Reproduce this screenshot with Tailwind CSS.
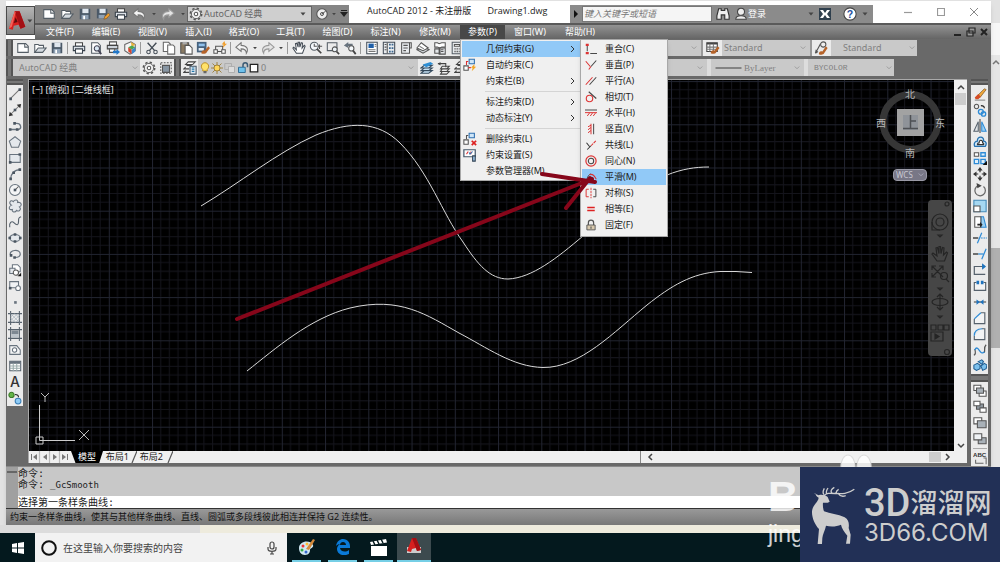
<!DOCTYPE html>
<html lang="zh-CN">
<head>
  <meta charset="UTF-8">
  <meta name="viewport" content="width=device-width, initial-scale=1">
  <title>AutoCAD 2012 - Drawing1.dwg</title>
  <script src="https://cdn.jsdelivr.net/npm/@tailwindcss/browser@4"></script>
</head>
<body class="relative flex h-screen flex-col overflow-hidden bg-[#e2e2e2] fill-none stroke-[1.2] font-['Noto_Sans','Noto_Sans_CJK_SC',sans-serif] text-[9px] leading-4 text-[#222]">

  <!-- Icon set -->
  <svg class="hidden">
    <symbol id="new" viewBox="0 0 16 16"><path d="M2 3h9l3 3v7H2z" fill="#fff" stroke="#555e66"/><path d="M10 3v4h4" stroke="#555e66"/></symbol>
    <symbol id="open" viewBox="0 0 16 16"><path d="M2 13V4h4l1 1h5v3" fill="#fff" stroke="#555e66"/><path d="M2 13l4-5h9l-4 5z" fill="#d5dbe0" stroke="#555e66"/></symbol>
    <symbol id="save" viewBox="0 0 16 16"><path d="M2 2h12v12H2z" fill="#4b5968"/><path d="M5 2h7v5H5z" fill="#dfe6ee"/><path d="M4 9h8v5H4z" fill="#8fa1b5"/><path d="M6 10h2v4H6z" fill="#fff"/></symbol>
    <symbol id="saveas" viewBox="0 0 16 16"><path d="M1 2h12v11H1z" fill="#4b5968"/><path d="M4 2h7v5H4z" fill="#dfe6ee"/><path d="M3 9h7v4H3z" fill="#8fa1b5"/><path d="M9 14l1-3 4-4 2 2-4 4z" fill="#f0a030" stroke="#7a4a12" stroke-width=".6"/></symbol>
    <symbol id="print" viewBox="0 0 16 16"><path d="M4 2h8v4H4z" fill="#fff" stroke="#444"/><path d="M1.500 6h13v5h-13z" fill="#dde2e8" stroke="#39424c"/><path d="M4 9h8v5H4z" fill="#fff" stroke="#39424c"/></symbol>
    <symbol id="preview" viewBox="0 0 16 16"><path d="M3 2h7l3 3v9H3z" fill="#fff" stroke="#555e66"/><circle cx="9" cy="8.500" r="3" fill="#dbe9f5" stroke="#445"/><path d="M11 11l3 4" stroke="#445" stroke-width="2"/></symbol>
    <symbol id="publish" viewBox="0 0 16 16"><path d="M4 1h8v4H4z" fill="#fff" stroke="#555"/><path d="M1.500 5h12v4h-12z" fill="#cdd3da" stroke="#444"/><path d="M4 9h6v4H4z" fill="#fff" stroke="#555"/><path d="M8 11h4V9l4 3.500-4 3.500v-2H8z" fill="#2277c8"/></symbol>
    <symbol id="cube" viewBox="0 0 16 16"><path d="M2 4l7-3 5 3v7l-6 4-6-4z" fill="#f4f4f4" stroke="#666"/><path d="M9 1l5 3-4 3z" fill="#e8b23c"/><path d="M6 7l4-2 4 2-4 3z" fill="#4da64d"/><path d="M6 7l4 3v5l-4-3z" fill="#d8462c"/><path d="M10 10l4-3v5l-4 3z" fill="#3a86cf"/></symbol>
    <symbol id="cut" viewBox="0 0 16 16"><path d="M3 2l8 9M13 2L5 11" stroke="#444c55" stroke-width="1.600"/><circle cx="4" cy="12.500" r="2" stroke="#444c55"/><circle cx="12" cy="12.500" r="2" stroke="#444c55"/></symbol>
    <symbol id="copy" viewBox="0 0 16 16"><path d="M1.500 1.500h6l2 2V12h-8z" fill="#fff" stroke="#666"/><path d="M6.500 4.500h6l2 2V15h-8z" fill="#fff" stroke="#666"/></symbol>
    <symbol id="paste" viewBox="0 0 16 16"><path d="M2 2h9v12H2z" fill="#8a7a62" stroke="#555"/><path d="M4 1h5v3H4z" fill="#aaa"/><path d="M7 5h5l3 3v7H7z" fill="#fff" stroke="#555"/></symbol>
    <symbol id="match" viewBox="0 0 16 16"><path d="M1 1h11v12H1z" fill="#47627e"/><path d="M3 3h7v3H3z" fill="#8fc0ec"/><path d="M3 8h6v3H3z" fill="#e6edf4"/><path d="M6 14c0-3 3-4 4-3l4-5 2 2-4 5c-1 2-4 2-6 1z" fill="#b5632a"/></symbol>
    <symbol id="block" viewBox="0 0 16 16"><path d="M3 6h8v6H3z" stroke="#555"/><path d="M1 10h4v4H1zM10 10h4v4h-4z" fill="#fff" stroke="#555"/><path d="M13 0l-3 4h2l-1 4 5-5h-2z" fill="#f0a030"/></symbol>
    <symbol id="undo" viewBox="0 0 16 16"><path d="M7 2L1 7l6 5V9c4 0 6 1 6 5 3-5 0-9-6-9z" fill="#f4f4f4" stroke="#777"/></symbol>
    <symbol id="redo" viewBox="0 0 16 16"><path d="M9 2l6 5-6 5V9c-4 0-6 1-6 5-3-5 0-9 6-9z" fill="#e4e4e4" stroke="#999"/></symbol>
    <symbol id="down" viewBox="0 0 16 16"><path d="M3 5h10l-5 6z" fill="#444"/></symbol>
    <symbol id="pan" viewBox="0 0 16 16"><path d="M5 14L1 8l1-1 3 3-1-7 1.500-.5L7 7V1.500h1.500L9 7l1.500-5 1.500.5L11.500 8 14 5l1 1-3 8z" fill="#fff" stroke="#444c55"/></symbol>
    <symbol id="zoom" viewBox="0 0 16 16"><circle cx="6" cy="6" r="4.500" fill="#f4f8fb" stroke="#555e66"/><path d="M9 9l5 5" stroke="#444" stroke-width="2"/><path d="M6 3v3h3M12 4v5M10 6h5" stroke="#555"/></symbol>
    <symbol id="zoomwin" viewBox="0 0 16 16"><path d="M1.500 2h11v9h-11z" stroke="#555e66"/><circle cx="10" cy="9.500" r="2.800" fill="#eef5fa" stroke="#555"/><path d="M12 12l3 3" stroke="#444" stroke-width="2"/></symbol>
    <symbol id="zoomprev" viewBox="0 0 16 16"><path d="M6 1L1 5l5 3V6h5V3H6z" fill="#68737e"/><circle cx="9.500" cy="8.500" r="3" fill="#f4f8fb" stroke="#555"/><path d="M11.500 11l3 4" stroke="#444" stroke-width="2"/></symbol>
    <symbol id="props" viewBox="0 0 16 16"><path d="M2 1.500h12v13H2z" fill="#fff" stroke="#434d58"/><path d="M4 3h6v5H4z" fill="#1f5fa8"/><path d="M11 4h2M11 6h2M4 10h8M4 12h8" stroke="#777"/></symbol>
    <symbol id="dcenter" viewBox="0 0 16 16"><path d="M1.500 1.500h13v13h-13z" fill="#e8ebee" stroke="#434d58"/><path d="M6 2v12M3 4h2M3 7h2M3 10h2" stroke="#555"/><path d="M8 3h2v2H8zM11 3h2v2h-2zM8 7h2v2H8zM11 7h2v2h-2zM8 11h2v2H8zM11 11h2v2h-2z" fill="#3c6890"/></symbol>
    <symbol id="palette" viewBox="0 0 16 16"><path d="M3 2h9v12H3z" fill="#e8ebee" stroke="#555"/><path d="M12 2h2v6h-2M5 5h5M5 8h5M5 11h3" stroke="#555"/></symbol>
    <symbol id="sheet" viewBox="0 0 16 16"><path d="M1 10l7-3 7 3-7 4z" fill="#d5dade" stroke="#555"/><path d="M1 8l5-6 8 6-6 3z" fill="#fff" stroke="#555"/><path d="M4 6l5 3" stroke="#777"/></symbol>
    <symbol id="markup" viewBox="0 0 16 16"><path d="M2 2h3l2 1 3-1h4v5h-4l-2 1-3-1H2z" fill="#fff" stroke="#555"/><path d="M2 9h6v5H2zM7 8h7v7H7z" fill="#e4e7ea" stroke="#555"/><path d="M9 10h3M9 12h3" stroke="#555"/></symbol>
    <symbol id="calc" viewBox="0 0 16 16"><path d="M2.500 1.500h11v13h-11z" fill="#e8ebee" stroke="#555e66"/><path d="M5 4h6v2H5z" fill="#fff" stroke="#555"/><path d="M5 9h6M5 12h6" stroke="#555" stroke-width="1.500" stroke-dasharray="1.500 1"/></symbol>
    <symbol id="gear" viewBox="0 0 16 16"><circle cx="8" cy="8" r="6.500" stroke="#555" stroke-width="1.800" stroke-dasharray="2.600 2.500"/><circle cx="8" cy="8" r="5.300" fill="#f0f0f0" stroke="#555" stroke-width="1"/><circle cx="8" cy="8" r="2" fill="#fff" stroke="#555"/></symbol>
    <symbol id="frame" viewBox="0 0 16 16"><path d="M2 2h12v12H2z" stroke="#555" stroke-dasharray="2 1.500"/><path d="M4 5h8v8H4z" fill="#8795a2" stroke="#555"/></symbol>
    <symbol id="layers" viewBox="0 0 16 16"><path d="M6 1h8l-3 3H3zM4 5h6M3 7l-2 2h6M3 11l-2 2h6" fill="#fff" stroke="#444"/><path d="M8 6h7v9H8z" fill="#dfe8f0" stroke="#456"/><path d="M10 8h3M10 10h3M10 12h3" stroke="#27a"/></symbol>
    <symbol id="bulb" viewBox="0 0 16 16"><path d="M5 10C1 6 4 1 8 1s7 5 3 9v2H5z" fill="#ffe26a" stroke="#b98a1d"/><path d="M6 12h4v3H6z" fill="#666"/></symbol>
    <symbol id="sun" viewBox="0 0 16 16"><path d="M8 0v16M0 8h16M2 2l12 12M14 2L2 14" stroke="#9a7c35"/><circle cx="8" cy="8" r="4" fill="#ffd75a" stroke="#9a7c35"/></symbol>
    <symbol id="vp" viewBox="0 0 16 16"><path d="M1 2h9v8H1z" stroke="#aaa"/><path d="M6 6h8v8H6z" fill="#ddd" stroke="#aaa"/></symbol>
    <symbol id="unlock" viewBox="0 0 16 16"><path d="M8 7V4a3 3 0 016 0v3" stroke="#3a5a74" stroke-width="2"/><path d="M2 7h9v7H2z" fill="#6ec1ec" stroke="#2a6690"/></symbol>
    <symbol id="white" viewBox="0 0 16 16"><path d="M2 2h12v12H2z" fill="#fff" stroke="#222" stroke-width="2"/></symbol>
    <symbol id="stack" viewBox="0 0 16 16"><path d="M5 5h9l-4 3H1zM5 8h9l-4 3H1zM5 11h9l-4 3H1z" fill="#c9e4f7" stroke="#34495c"/><path d="M3 4l9-3 3 2-8 4z" fill="#2f8fd4"/></symbol>
    <symbol id="layprev" viewBox="0 0 16 16"><path d="M6 6h8l-3 3H4zM6 9h8l-3 3H4zM6 12h8l-3 3H4z" fill="#eee" stroke="#444"/><path d="M1 3h9v4" stroke="#444"/><path d="M1 3l3-2v4z" fill="#444"/></symbol>
    <symbol id="tblstyle" viewBox="0 0 16 16"><path d="M1.500 2h12v10h-12z" fill="#fff" stroke="#444"/><path d="M1.500 3h12" stroke="#444" stroke-width="2"/><path d="M1 7h13M1 9.500h13M5 3v9M9 3v9" stroke="#777"/><path d="M6 14c0-3 2-4 4-3l4-5 2 2-4 5c-1 2-4 2-6 1z" fill="#b5632a"/></symbol>
    <symbol id="mlstyle" viewBox="0 0 16 16"><path d="M1 14L7 3M1 14l1-4M1 14l3-2" stroke="#555"/><circle cx="10" cy="4" r="3" fill="#eee" stroke="#555"/><path d="M5 15c0-3 2-4 4-3l4-6 2 2-4 6c-1 2-4 2-6 1z" fill="#b5632a"/></symbol>

    <symbol id="line" viewBox="0 0 16 16"><path d="M3 13L13 3" stroke="#777"/><path d="M1.500 12h3v3h-3zM12 1.500h3v3h-3z" fill="#4a5560"/></symbol>
    <symbol id="xline" viewBox="0 0 16 16"><path d="M2 14L14 2" stroke="#777"/><path d="M1 15l1-5 4 4zM15 1l-1 5-4-4z" fill="#333"/><path d="M6.500 6.500h3v3h-3z" fill="#4a5560"/></symbol>
    <symbol id="pline" viewBox="0 0 16 16"><path d="M2 12h10c4-1 3-7-2-7H8" stroke="#68737e" stroke-width="1.500"/><path d="M1 10.500h3v3H1zM9 10.500h3v3H9zM6 3.500h3v3H6z" fill="#4a5560"/></symbol>
    <symbol id="polygon" viewBox="0 0 16 16"><path d="M8 2l6.500 5-2.500 7H4L1.500 7z" fill="#e4e8ec" stroke="#68737e"/></symbol>
    <symbol id="rect" viewBox="0 0 16 16"><path d="M2 4h12v9H2z" fill="#e4e8ec" stroke="#68737e"/><path d="M1 11.500h3v3H1zM12 2.500h3v3h-3z" fill="#4a5560"/></symbol>
    <symbol id="arc" viewBox="0 0 16 16"><path d="M3 14C3 8 7 3 14 3" stroke="#68737e" stroke-width="1.500"/><path d="M1.500 12h3v3h-3zM12 1.500h3v3h-3zM5 5h3v3H5z" fill="#4a5560"/></symbol>
    <symbol id="circle" viewBox="0 0 16 16"><circle cx="8" cy="8" r="6.300" fill="#f4f5f6" stroke="#68737e"/><path d="M8 8l4-4" stroke="#555"/><path d="M6.500 6.500h3v3h-3z" fill="#4a5560"/></symbol>
    <symbol id="cloud" viewBox="0 0 16 16"><path d="M4 7C0 5 3 0 6 3c2-3 6-2 5 1 5-1 5 4 2 5 3 3-1 6-3 4-2 3-6 2-5-1-4 1-5-3-1-5z" fill="#e4e8ec" stroke="#68737e"/></symbol>
    <symbol id="spline" viewBox="0 0 16 16"><path d="M2 14c-1-5 2-8 5-5s5 3 5-1 0-5 3-6" stroke="#56616c" stroke-width="1.300"/></symbol>
    <symbol id="ellipse" viewBox="0 0 16 16"><ellipse cx="8" cy="8" rx="6" ry="4" fill="#e4e8ec" stroke="#68737e"/><path d="M0.500 6.500h3v3h-3zM12.500 6.500h3v3h-3zM6.500 2.500h3v3h-3zM6.500 10.500h3v3h-3z" fill="#4a5560"/></symbol>
    <symbol id="earc" viewBox="0 0 16 16"><path d="M3 9c-3-5 11-8 11-1 0 3-3 4-6 4" stroke="#68737e" stroke-width="1.400"/><path d="M2 8h3v3H2zM6 10.500h3v3H6z" fill="#4a5560"/></symbol>
    <symbol id="insert" viewBox="0 0 16 16"><path d="M5 2h6l3 3v5H5z" fill="#fff" stroke="#68737e"/><path d="M2 6h6v6H2z" fill="#e4e8ec" stroke="#68737e"/><circle cx="9" cy="11" r="3" fill="#fff" stroke="#555"/><path d="M15 11v4h-4z" fill="#111"/></symbol>
    <symbol id="mkblock" viewBox="0 0 16 16"><path d="M2 3h10v7H2z" fill="#f0f2f4" stroke="#68737e"/><path d="M1 9h3v3H1z" fill="#4a5560"/><circle cx="11.500" cy="10.500" r="2.700" fill="#fff" stroke="#68737e"/></symbol>
    <symbol id="point" viewBox="0 0 16 16"><path d="M7 7h3v3H7z" fill="#68737e"/></symbol>
    <symbol id="hatch" viewBox="0 0 16 16"><path d="M3 0v16M13 0v16M0 3h16M0 13h16" stroke="#56616c"/><path d="M3 7l4-4M3 11l8-8M5 13l8-8M9 13l4-4M3 3l10 10M3 8l5 5M8 3l5 5" stroke="#a8b4be" stroke-width=".8"/></symbol>
    <symbol id="gradient" viewBox="0 0 16 16"><path d="M4 4h8v4H4z" fill="#7d8892"/><path d="M4 8h8v4H4z" fill="#bcc4cb"/><path d="M3 0v16M13 0v16M0 3h16M0 13h16" stroke="#56616c"/></symbol>
    <symbol id="region" viewBox="0 0 16 16"><path d="M2 3h8l4 5v5H2z" fill="#f3f4f5" stroke="#68737e"/><circle cx="7.500" cy="8" r="2.500" fill="#fff" stroke="#68737e"/></symbol>
    <symbol id="table" viewBox="0 0 16 16"><path d="M2 2.500h12.500v11H2z" fill="#fff" stroke="#56616c"/><path d="M2 4h12" stroke="#68737e" stroke-width="3"/><path d="M2 8h12M2 10.500h12M6 5v9M10 5v9" stroke="#9aa"/></symbol>
    <symbol id="mtext" viewBox="0 0 16 16"><text x="8" y="14" font-size="16" font-weight="500" text-anchor="middle" fill="#333" font-family="Inter, sans-serif">A</text></symbol>
    <symbol id="addsel" viewBox="0 0 16 16"><circle cx="4" cy="4.500" r="3" fill="#64b548" stroke="#3c7a2a"/><circle cx="11.500" cy="11.500" r="3.300" fill="#8ecbf5" stroke="#3c80b8"/><path d="M8 4c3 0 4 1 4 3" stroke="#222"/></symbol>

    <symbol id="erase" viewBox="0 0 16 16"><path d="M5 10l8-8 2 1-7 9z" fill="#f0a83c" stroke="#7a5322" stroke-width=".8"/><path d="M2 12l4-4 3 3-3 3H3z" fill="#d44c25"/><path d="M2 15h12" stroke="#888"/></symbol>
    <symbol id="mcopy" viewBox="0 0 16 16"><circle cx="4" cy="4" r="2.500" stroke="#555"/><path d="M9 3c3 0 4 1 4 3" stroke="#222"/><circle cx="9" cy="10" r="2.800" stroke="#2e8bd6" stroke-width="1.500"/><circle cx="12" cy="12.500" r="2.500" stroke="#2e8bd6" stroke-width="1.500"/></symbol>
    <symbol id="mirror" viewBox="0 0 16 16"><path d="M6 3v11H1z" fill="#e3e6e8" stroke="#56616c"/><path d="M10 3v11h5z" fill="#9cd0f2" stroke="#2e8bd6"/><path d="M8 0v16" stroke="#444"/></symbol>
    <symbol id="offset" viewBox="0 0 16 16"><path d="M2 13c-2-5 2-6 3-6 0-6 8-6 7 0 3 0 4 3 2 6z" fill="#cde6f8" stroke="#2471b0" stroke-width="1.500"/><path d="M5 11c0-2 1-2 2-2 0-4 4-4 4 0 1 0 2 1 1 2z" fill="#fff" stroke="#333"/></symbol>
    <symbol id="array" viewBox="0 0 16 16"><path d="M1.500 2h5v4h-5z" fill="#fff" stroke="#555"/><path d="M9 2h5v4H9zM1.500 9.500h5v5h-5zM9 9.500h5v5H9z" fill="#e0f0fb" stroke="#2e8bd6" stroke-width="1.500"/><path d="M16 11v5h-5z" fill="#111"/></symbol>
    <symbol id="move" viewBox="0 0 16 16"><path d="M8 2v4M8 10v4M2 8h4M10 8h4" stroke="#333" stroke-width="1.400"/><path d="M8 0l3 4H5zM8 16l3-4H5zM0 8l4-3v6zM16 8l-4-3v6z" fill="#333"/></symbol>
    <symbol id="rotate" viewBox="0 0 16 16"><path d="M6 3a6 6 0 106 1" stroke="#666" stroke-width="1.400"/><path d="M4 0l6 3-5 3z" fill="#444"/></symbol>
    <symbol id="scale" viewBox="0 0 16 16"><path d="M1 1.500h14v13H1z" fill="#a5d8f2" stroke="#4189b8"/><path d="M1 8h7v6.500H1z" fill="#fff" stroke="#555"/></symbol>
    <symbol id="stretch" viewBox="0 0 16 16"><path d="M9 2h3l3 12H9z" fill="#9cd0f2" stroke="#2e8bd6"/><path d="M2 2h7v12H2z" fill="#fff" stroke="#555"/><path d="M5 10h3V8l3 3-3 3v-2H5z" fill="#222"/></symbol>
    <symbol id="trim" viewBox="0 0 16 16"><path d="M5 14l5-12" stroke="#2e8bd6" stroke-width="1.400"/><path d="M0 8h6" stroke="#222" stroke-width="1.400"/><path d="M9 8h7" stroke="#2e8bd6" stroke-dasharray="2 1"/></symbol>
    <symbol id="extend" viewBox="0 0 16 16"><path d="M10 14l5-12" stroke="#2e8bd6" stroke-width="1.400"/><path d="M0 8h6" stroke="#222" stroke-width="1.400"/><path d="M6 8h6" stroke="#2e8bd6" stroke-width="1.400"/></symbol>
    <symbol id="breakpt" viewBox="0 0 16 16"><path d="M13 4H1.500v9H14" stroke="#56616c" stroke-width="1.400"/><path d="M11 1.500l3 2.500-3 2.500z" fill="#1e73be" stroke="#1e73be"/></symbol>
    <symbol id="break" viewBox="0 0 16 16"><path d="M4 4H1.500v9h13V4H12" fill="#f2f3f4" stroke="#56616c" stroke-width="1.300"/><path d="M4 2h3v4H4zM9 2h3v4H9z" fill="#1e73be"/></symbol>
    <symbol id="join" viewBox="0 0 16 16"><path d="M1 8h14" stroke="#444"/><path d="M4 5l4 3-4 3zM12 5L8 8l4 3z" fill="#1e73be"/></symbol>
    <symbol id="chamfer" viewBox="0 0 16 16"><path d="M1.500 9v5.500h12V2H9" fill="#f2f3f4" stroke="#56616c" stroke-width="1.300"/><path d="M1.500 9L9 2" stroke="#2e8bd6" stroke-width="1.400"/></symbol>
    <symbol id="fillet" viewBox="0 0 16 16"><path d="M1.500 10v4.500h12V2H10" fill="#f2f3f4" stroke="#56616c" stroke-width="1.300"/><path d="M1.500 10c0-5 3-8 9-8" stroke="#2e8bd6" stroke-width="1.400"/></symbol>
    <symbol id="blend" viewBox="0 0 16 16"><path d="M1 14c2-1 2-4 1-7M13 11c1-3-1-6 2-9" stroke="#555" stroke-width="1.400"/><path d="M2 8c4-8 6 8 11 2" stroke="#2e8bd6" stroke-width="1.500"/></symbol>
    <symbol id="explode" viewBox="0 0 16 16"><path d="M1 7l4-2 3 2v4l-4 2-3-2zM6 3l4-2 2 2-2 3zM9 8l4-3 3 2-1 4-4 2z" fill="#7cc0ec" stroke="#215f93"/></symbol>
    <symbol id="front" viewBox="0 0 16 16"><path d="M1 1.500h8v6H1zM7 8h8v6H7z" fill="#fff" stroke="#555"/><path d="M4 4.500h8v6H4z" fill="#a9b1b8" stroke="#555"/></symbol>
    <symbol id="back" viewBox="0 0 16 16"><path d="M4 4.500h8v6H4z" fill="#8d969e" stroke="#555"/><path d="M1 1.500h7v5H1zM8 9h7v5H8z" fill="#fff" stroke="#555"/></symbol>
    <symbol id="above" viewBox="0 0 16 16"><path d="M1 2h9v7H1z" fill="#fff" stroke="#555"/><path d="M5 5.500h10v8H5z" fill="#a9b1b8" stroke="#555"/></symbol>
    <symbol id="under" viewBox="0 0 16 16"><path d="M6 6.500h9v7H6z" fill="#a9b1b8" stroke="#555"/><path d="M1 2h9v7H1z" fill="#eef1f4" stroke="#555"/></symbol>
    <symbol id="abc" viewBox="0 0 16 16"><text x="0" y="7" font-size="7" font-weight="700" fill="#333" font-family="Liberation Sans, sans-serif">ABC</text><path d="M3 10v4h9M12 8h3v7" stroke="#666"/></symbol>

    <symbol id="g-coincident" viewBox="0 0 16 16"><path d="M3 4v7M7 14h9" stroke="#444" stroke-width="1.300"/><path d="M1 1h4v3H1zM1 12h4v3H1z" fill="#d33"/></symbol>
    <symbol id="g-perp" viewBox="0 0 16 16"><path d="M1 3l6 7M5 14l3-4" stroke="#d33" stroke-width="1.400"/><path d="M8 10l7-8" stroke="#444" stroke-width="1.400"/></symbol>
    <symbol id="g-parallel" viewBox="0 0 16 16"><path d="M1 13L10 3" stroke="#d33" stroke-width="1.400"/><path d="M6 13l9-10" stroke="#444" stroke-width="1.400"/></symbol>
    <symbol id="g-tangent" viewBox="0 0 16 16"><circle cx="6" cy="10" r="4.300" stroke="#d33" stroke-width="1.500"/><path d="M5 1l10 9" stroke="#444" stroke-width="1.400"/></symbol>
    <symbol id="g-horizontal" viewBox="0 0 16 16"><path d="M0 4h16" stroke="#444" stroke-width="1.300"/><path d="M0 7.500h16M3 12l3-4M7 12l3-4M11 12l3-4" stroke="#d33" stroke-width="1.300"/></symbol>
    <symbol id="g-vertical" viewBox="0 0 16 16"><path d="M11.500 1v14" stroke="#444" stroke-width="1.300"/><path d="M8 1v14M4 5l4-2M4 9l4-3M4 13l4-3" stroke="#d33" stroke-width="1.300"/></symbol>
    <symbol id="g-collinear" viewBox="0 0 16 16"><path d="M2 5l4 5M3 14l4-4 1-1" stroke="#333" stroke-width="1.400"/><path d="M8 9l7-7" stroke="#d33" stroke-width="1.400" stroke-dasharray="4 1"/></symbol>
    <symbol id="g-concentric" viewBox="0 0 16 16"><circle cx="8" cy="8" r="6.800" stroke="#d33" stroke-width="1.600"/><circle cx="8" cy="8" r="3.600" stroke="#444" stroke-width="1.400"/></symbol>
    <symbol id="g-smooth" viewBox="0 0 16 16"><path d="M2 12c2-6 4-8 6-8" stroke="#444" stroke-width="1.300"/><path d="M6 5c4-2 7 2 9 6" stroke="#d33" stroke-width="1.500"/></symbol>
    <symbol id="g-symmetric" viewBox="0 0 16 16"><path d="M5 3H1.500v10H5" stroke="#d33" stroke-width="1.300"/><path d="M8 1v14" stroke="#d33" stroke-dasharray="3 1"/><path d="M11 3h3.500v10H11" stroke="#444" stroke-width="1.300"/></symbol>
    <symbol id="g-equal" viewBox="0 0 16 16"><path d="M3 6h10M3 10h10" stroke="#d22" stroke-width="2"/></symbol>
    <symbol id="g-fix" viewBox="0 0 16 16"><path d="M4.500 8V5a3.500 3.500 0 017 0v3" stroke="#555" stroke-width="1.600"/><path d="M2.500 8h11v6.500h-11z" fill="#d8c9ae" stroke="#555"/><path d="M8 10v3" stroke="#555" stroke-width="1.500"/></symbol>
    <symbol id="autoc" viewBox="0 0 16 16"><path d="M7 1.500h6v5H7z" fill="#cfe6f8" stroke="#2e6fb0"/><path d="M1 9h5v5H1z" fill="#fff" stroke="#555"/><path d="M4 8V4h2M6 11h3" stroke="#d33"/><path d="M13 7l-4 4h2l-1 4 5-5h-2z" fill="#f5a623"/></symbol>
    <symbol id="delc" viewBox="0 0 16 16"><path d="M7 1.500h6v5H7z" fill="#cfe6f8" stroke="#2e6fb0"/><path d="M1 9h5v5H1z" fill="#fff" stroke="#555"/><path d="M4 8V4h2" stroke="#555"/><path d="M10 10l5 5M15 10l-5 5" stroke="#d22" stroke-width="2"/></symbol>
    <symbol id="setc" viewBox="0 0 16 16"><path d="M1 2h13v8H1z" fill="#fff" stroke="#46586a" stroke-width="1.400"/><path d="M4 7l2-3M9 4v3" stroke="#d33"/><path d="M7 5l1 2 3-3" stroke="#2e6fb0"/><path d="M11 9h3v6h-3z" fill="#9cc3e6" stroke="#345"/></symbol>
    <symbol id="sub" viewBox="0 0 6 8"><path d="M1 1l3 3-3 3" stroke="#333" stroke-width="1"/></symbol>
    <symbol id="chev" viewBox="0 0 8 6"><path d="M1 1l3 3 3-3" stroke="#999"/></symbol>
  </svg>

  <!-- Application window -->
  <div class="mt-px mr-[9px] ml-1.5 flex min-h-0 flex-1 flex-col bg-[#696969] shadow-md">

    <header class="relative z-20 flex bg-white">
      <button aria-label="应用程序菜单" class="mt-[5px] flex h-[29px] w-[29px] items-center border border-[#4a4a4a] bg-linear-to-b from-[#b5b5b5] to-[#7e7e7e]">
        <svg class="h-6 w-5" viewBox="0 0 20 24"><path d="M2 20L8 2h5l6 16-5 2-2-4-5 1-1 4z" fill="#d6201f"/><path d="M8 2h5l6 16-5 2z" fill="#a30f14"/><path d="M9 8l2 5-4 1z" fill="#5d0b0e"/><path d="M2 20L8 2l1 1-4 15z" fill="#f4625a"/></svg>
        <svg class="size-2" viewBox="0 0 16 16"><use href="#down"/></svg>
      </button>
      <div class="flex min-w-0 flex-1 flex-col">
        <div class="flex h-[22px] items-end">
          <div class="flex h-[18px] w-[314px] items-center bg-[#858585]">
            <div class="flex items-center gap-0.5 pl-1.5" data-icons="new:新建 open:打开 save:保存 saveas:另存为 print:打印 undo:放弃 down:更多放弃 redo:重做 down:更多重做" data-size="sm"></div>
            <label class="ml-auto flex h-4 w-[126px] items-center border border-[#666] bg-[#cfcfcf] pr-1 pl-px text-[#666]">
              <svg class="size-3.5 shrink-0" aria-hidden="true"><use href="#gear"/></svg>
              <select aria-label="工作空间" class="min-w-0 flex-1 appearance-none pl-px"><option>AutoCAD 经典</option></select>
              <svg class="size-2" aria-hidden="true"><use href="#down"/></svg>
            </label>
            <button aria-label="导航" class="flex h-full w-[37px] items-center justify-around bg-[#858585] pl-0.5">
              <svg class="size-3" viewBox="0 0 16 16"><circle cx="8" cy="8" r="7" fill="#eee" stroke="#555" stroke-width="1.500"/><circle cx="8" cy="8" r="2" stroke="#444"/><path d="M8 8l5-4" stroke="#444"/></svg>
              <svg class="size-1.5"><use href="#down"/></svg>
              <svg class="size-2" viewBox="0 0 8 8"><path d="M1 0h6v1H1zM0 2h8L4 7z" fill="#222"/></svg>
            </button>
          </div>
          <h1 class="ml-[18px] pb-1 font-['Open_Sans','Noto_Sans_CJK_SC',sans-serif] text-[9px] leading-4 whitespace-pre text-[#222]">AutoCAD 2012 - 未注册版       Drawing1.dwg</h1>
          <div class="mr-[31px] ml-auto flex h-[18px] w-[303px] items-center bg-[#8b8b8b]">
            <button aria-label="展开搜索" class="flex w-3 justify-center"><svg class="h-2 w-1.5" viewBox="0 0 6 8"><path d="M1 0l4 4-4 4z" fill="#111"/></svg></button>
            <input aria-label="搜索" placeholder="键入关键字或短语" class="h-4 w-[130px] border border-[#777] bg-[#f5f5f5] px-px text-[9px] italic placeholder:text-[#777]">
            <button aria-label="查找" class="ml-1"><svg class="size-3.5" viewBox="0 0 16 16"><path d="M3 2h3v2h4V2h3l2 8v4h-5V9H6v5H1v-4z" fill="#eee" stroke="#333" stroke-width="1.300"/></svg></button>
            <button class="ml-1 flex items-center text-white"><svg class="size-3.5" viewBox="0 0 16 16"><circle cx="8" cy="5.500" r="4" fill="#eee" stroke="#444"/><path d="M2 14c0-3 3-4 6-4s6 1 6 4z" fill="#eee" stroke="#444"/></svg>登录</button>
            <svg class="ml-auto size-2"><use href="#down"/></svg>
            <button aria-label="Exchange" class="ml-1"><svg class="size-3" viewBox="0 0 12 12"><path d="M0 0h12v12H0z" fill="#2f3f4d"/><path d="M1 2h3l2 3 2-3h3L8 6l3 4H8L6 7l-2 3H1l3-4z" fill="#fff"/></svg></button>
            <button aria-label="帮助" class="ml-3 flex items-center gap-1"><svg class="size-3.5" viewBox="0 0 16 16"><circle cx="8" cy="8" r="7" fill="#fff" stroke="#444"/><text x="8" y="12.500" text-anchor="middle" font-size="12" font-weight="700" fill="#1c4fa0" font-family="Liberation Sans, sans-serif">?</text></svg><svg class="mr-1 size-2"><use href="#down"/></svg></button>
          </div>
          <div class="mr-[13px] flex h-full items-center gap-[25px]">
            <button aria-label="最小化"><svg class="size-2" viewBox="0 0 8 8"><path d="M0 4.500h8" stroke="#999"/></svg></button>
            <button aria-label="最大化"><svg class="size-2" viewBox="0 0 8 8"><path d="M.5.5h7v7h-7z" stroke="#999"/></svg></button>
            <button aria-label="关闭"><svg class="size-2" viewBox="0 0 8 8"><path d="M0 0l8 8M8 0L0 8" stroke="#888" stroke-width="1"/></svg></button>
          </div>
        </div>

        <nav class="flex h-4 items-stretch border-t-2 border-[#5a5a5a] bg-linear-to-b from-[#939393] to-[#656565] pl-0.5 leading-[14px] text-white">
          <button class="w-[46px]">文件(F)</button>
          <button class="w-[46px]">编辑(E)</button>
          <button class="w-[47px]">视图(V)</button>
          <button class="w-[45px]">插入(I)</button>
          <button class="w-[46px]">格式(O)</button>
          <button class="w-[47px]">工具(T)</button>
          <button class="w-[47px]">绘图(D)</button>
          <button class="w-[49px]">标注(N)</button>
          <button class="w-[50px]">修改(M)</button>
          <div class="relative w-[45px]">
            <button class="h-full w-full bg-[#484848]">参数(P)</button>
            <!-- Parametric menu -->
            <ul class="absolute top-full left-0 w-[121px] border border-[#a8a8a8] bg-[#f0f0f0] py-px text-[#222] shadow-md" role="menu">
              <li class="relative ml-px"><button class="flex h-4 w-full items-center bg-[#91c9f7] pr-1"><span class="w-6"></span>几何约束(G)<svg class="ml-auto h-2 w-1.5"><use href="#sub"/></svg></button>
                <ul id="geo" class="absolute -top-0.5 left-full h-[198px] w-[88px] border border-[#a8a8a8] bg-[#f0f0f0] pt-px shadow-md" role="menu"></ul>
              </li>
              <li><button class="flex h-4 w-full items-center pr-1"><span class="flex w-[25px] pl-0.5"><svg class="size-3.5"><use href="#autoc"/></svg></span>自动约束(C)</button></li>
              <li><button class="flex h-4 w-full items-center pr-1"><span class="w-[25px]"></span>约束栏(B)<svg class="ml-auto h-2 w-1.5"><use href="#sub"/></svg></button></li>
              <li class="my-0.5 ml-6 border-t border-[#d4d4d4]"></li>
              <li><button class="flex h-4 w-full items-center pr-1"><span class="w-[25px]"></span>标注约束(D)<svg class="ml-auto h-2 w-1.5"><use href="#sub"/></svg></button></li>
              <li><button class="flex h-4 w-full items-center pr-1"><span class="w-[25px]"></span>动态标注(Y)<svg class="ml-auto h-2 w-1.5"><use href="#sub"/></svg></button></li>
              <li class="my-0.5 ml-6 border-t border-[#d4d4d4]"></li>
              <li><button class="flex h-4 w-full items-center pr-1"><span class="flex w-[25px] pl-0.5"><svg class="size-3.5"><use href="#delc"/></svg></span>删除约束(L)</button></li>
              <li><button class="flex h-4 w-full items-center pr-1"><span class="flex w-[25px] pl-0.5"><svg class="size-3.5"><use href="#setc"/></svg></span>约束设置(S)</button></li>
              <li><button class="flex h-4 w-full items-center pr-1"><span class="w-[25px]"></span>参数管理器(M)</button></li>
            </ul>
          </div>
          <button class="w-[50px]">窗口(W)</button>
          <button class="w-[50px]">帮助(H)</button>
          <div class="mr-[3px] ml-auto flex items-center gap-1">
            <button aria-label="最小化图形"><svg class="size-2" viewBox="0 0 8 8"><path d="M0 6h7v2H0z" fill="#222"/></svg></button>
            <button aria-label="还原图形"><svg class="size-2.5" viewBox="0 0 10 10"><path d="M3 1h6v5H3zM1 4h6v5H1z" fill="#999" stroke="#222"/></svg></button>
            <button aria-label="关闭图形"><svg class="size-2" viewBox="0 0 8 8"><path d="M1 1l6 6M7 1L1 7" stroke="#222" stroke-width="2"/></svg></button>
          </div>
        </nav>
      </div>
    </header>

    <!-- Toolbars -->
    <div class="flex flex-col gap-[3px] pt-px pb-[3px] text-[#808080]">
      <div class="mr-[74px] flex h-4 bg-[#ebebeb]">
        <div class="w-[7px] border-x-2 border-[#555] bg-[#777]"></div>
        <div class="flex items-center pl-px" data-icons="new:新建 open:打开 save:保存 | print:打印 preview:预览 publish:发布 cube:三维打印 | cut:剪切 copy:复制 paste:粘贴 match:特性匹配 block:块编辑器 | undo:放弃 down:更多放弃 redo:重做 down:更多重做 | pan:平移 zoom:缩放 zoomwin:窗口缩放 zoomprev:上一个 | props:特性 dcenter:设计中心 palette:工具选项板 sheet:图纸集 markup:标记集 calc:计算器"></div>
        <label class="ml-2 flex flex-1 items-center bg-[#c9c9c9] pr-1"><select aria-label="文字样式" class="h-full flex-1 appearance-none pl-2"><option>Standard</option></select><svg class="size-1.5"><use href="#chev"/></svg></label>
        <label class="flex w-[109px] items-center border-l-2 border-[#999] bg-[#c9c9c9] pr-1"><svg class="h-4 w-[19px] bg-[#ebebeb] p-px"><use href="#tblstyle"/></svg><select aria-label="表格样式" class="h-full min-w-0 flex-1 appearance-none pl-0.5"><option>Standard</option></select><svg class="size-1.5"><use href="#chev"/></svg></label>
        <label class="flex w-[107px] items-center border-l-2 border-[#999] bg-[#c9c9c9] pr-0.5"><svg class="h-4 w-[19px] bg-[#ebebeb] p-px"><use href="#mlstyle"/></svg><select aria-label="多重引线样式" class="h-full min-w-0 flex-1 appearance-none pl-3"><option>Standard</option></select><svg class="size-1.5"><use href="#chev"/></svg></label>
      </div>
      <div class="mr-[97px] flex h-[17px] bg-[#ebebeb]">
        <div class="w-[7px] border-x-2 border-[#555] bg-[#777]"></div>
        <label class="flex w-[127px] items-center bg-[#c9c9c9] pr-0.5"><select aria-label="当前工作空间" class="h-full min-w-0 flex-1 appearance-none pl-1.5"><option>AutoCAD 经典</option></select><svg class="size-1.5"><use href="#chev"/></svg></label>
        <div class="flex w-[34px] items-center" data-icons="gear:工作空间设置 frame:我的工作空间"></div>
        <div class="w-[7px] border-x-2 border-[#555] bg-[#777]"></div>
        <div class="flex w-[17px] items-center" data-icons="layers:图层特性"></div>
        <label class="flex w-[220px] items-center bg-[#c9c9c9] pr-1 pl-px">
          <svg class="size-3"><use href="#bulb"/></svg><svg class="size-3"><use href="#sun"/></svg><svg class="mx-px size-3"><use href="#vp"/></svg><svg class="size-3"><use href="#unlock"/></svg><svg class="size-2.5"><use href="#white"/></svg>
          <select aria-label="图层" class="h-full min-w-0 flex-1 appearance-none pl-0.5"><option>0</option></select><svg class="size-1.5"><use href="#chev"/></svg></label>
        <div class="flex items-center" data-icons="stack:将对象的图层置为当前 layprev:上一个图层 layers:图层状态管理器"></div>
        <label class="ml-2 flex flex-1 items-center bg-[#c9c9c9] pr-1"><select aria-label="颜色" class="h-full flex-1 appearance-none pl-2"><option>ByLayer</option></select><svg class="size-1.5"><use href="#chev"/></svg></label>
        <label class="flex w-[97px] items-center border-l-4 border-[#ddd] bg-[#c9c9c9] pr-1"><svg class="h-1 w-[31px] shrink-0 pl-1" viewBox="0 0 26 4"><path d="M0 2h26" stroke="#555"/></svg><select aria-label="线宽" class="h-full min-w-0 flex-1 appearance-none pl-0.5 font-['Liberation_Serif',serif]"><option>ByLayer</option></select><svg class="size-1.5"><use href="#chev"/></svg></label>
        <label class="flex w-[90px] items-center border-l-4 border-[#ddd] bg-[#c9c9c9] pr-0.5"><select aria-label="打印样式" class="h-full min-w-0 flex-1 appearance-none pl-1.5 font-['Liberation_Mono',monospace] text-[8px]"><option>BYCOLOR</option></select><svg class="size-1.5"><use href="#chev"/></svg></label>
      </div>
    </div>

    <!-- Workspace -->
    <main class="flex min-h-0 flex-1">
      <aside class="ml-px w-4 self-start bg-[#ebebeb]">
        <div class="mb-px h-[6px] border-y-2 border-[#555] bg-[#777]"></div>
        <div class="flex flex-col" data-icons="line:直线 xline:构造线 pline:多段线 polygon:多边形 rect:矩形 arc:圆弧 circle:圆 cloud:修订云线 spline:样条曲线 ellipse:椭圆 earc:椭圆弧 insert:插入块 mkblock:创建块 point:点 hatch:图案填充 gradient:渐变色 region:面域 table:表格 mtext:多行文字 addsel:添加选定对象" data-size="md"></div>
      </aside>

      <section class="mr-1 mb-[3px] ml-[5px] flex min-w-0 flex-1 flex-col border-t border-l border-[#aaa]">
        <div class="flex min-h-0 flex-1">
          <div class="relative min-w-0 flex-1 overflow-hidden bg-black">
            <svg class="absolute inset-0 h-full w-full" stroke-width="1">
              <defs>
                <pattern id="grid" width="43.250" height="43.200" patternUnits="userSpaceOnUse" x="22.300" y="124.300">
                  <path d="M8.650 0v43M17.300 0v43M25.950 0v43M34.600 0v43M0 8.650h43M0 17.300h43M0 25.950h43M0 34.600h43" stroke="#14141b"/>
                  <path d="M.5 0v44M0 .5h44" stroke="#222531"/>
                </pattern>
              </defs>
              <g transform="translate(-29 -80)" stroke-width="1">
                <path d="M29 80h2000v2000H29z" fill="url(#grid)"/>
                <path d="M201 206C238 184 278 152 316 135C350 121 378 121 400 143C429 172 442 213 463 242C478 265 490 279 508 279C532 278 557 258 583 236C612 210 636 188 667 175C682 169 695 167 709 167" stroke="#d8d8d8"/>
                <path d="M247 371C275 349 310 318 350 308C400 296 427 315 459 333C486 347 513 367 543 367.500C580 368 614 332 647 305C671 286 692 273 720 271.500Q736 271 752 272.500" stroke="#d8d8d8"/>
                <path d="M39.500 405v35.500H75M36 437h7v7h-7z" stroke="#ccc"/>
                <path d="M41 393l4 4 4-4M45 397v5M79 430l10 10M89 430l-10 10" stroke="#bbb"/>
              </g>
            </svg>
            <p class="absolute top-0.5 left-[3px] text-[#e8e8e8]">[−] [俯视] [二维线框]</p>

            <!-- View cube -->
            <svg class="absolute top-1 right-1 h-20 w-[76px]" viewBox="0 0 76 80" font-size="10" text-anchor="middle">
              <circle cx="36.500" cy="38" r="27.500" stroke="#363636" stroke-width="7"/>
              <path d="M23 25h27v27H23z" fill="#a2a2a2"/>
              <path d="M29 31h15v15H29z" fill="#8f9399"/>
              <path d="M36.500 31v13M37 37h5M29 44.500h15" stroke="#4e5054" stroke-width="1.500"/>
              <g fill="#b8b8b8" stroke="none"><text x="36" y="14">北</text><text x="36" y="73">南</text><text x="7" y="43">西</text><text x="66" y="43">东</text></g>
            </svg>
            <button class="absolute top-[89px] right-[27px] flex h-3 w-[34px] items-center justify-between rounded-sm border border-[#9a9aa6] bg-[#787786] px-0.5 text-[8px] leading-3 text-[#c8c8d2]">WCS<svg class="size-1.5" viewBox="0 0 8 6"><path d="M1 1l3 3 3-3" stroke="#aab"/></svg></button>
            <div class="absolute top-[120px] right-0.5 h-[156px] w-6 rounded-sm bg-[#464646]">
              <svg class="h-[156px] w-6" viewBox="0 0 24 156" stroke="#252525" stroke-width="1.200">
                <circle cx="19" cy="4" r="2"/><circle cx="12" cy="22" r="8"/><circle cx="12" cy="22" r="4"/><path d="M4 22v8h8M10 35h4l-2 2z"/>
                <path d="M9 61l-5-7 1-1 4 3-1-8 1.500-.5 1.500 6v-7h1.500l.5 7 1.500-6 1.500.5-.5 7 3-3 1 1-3 8z"/>
                <path d="M4 66l11 11M15 66L4 77M4 70v-4h4M11 66h4v4M4 73v4h4"/><circle cx="16" cy="76" r="3.500"/><path d="M18 79l3 3M10 88h4l-2 2z"/>
                <path d="M12 94v16M9 97l3-3 3 3M9 107l3 3 3-3"/><ellipse cx="12" cy="102" rx="8" ry="3.500"/><path d="M10 116h4l-2 2z"/>
                <path d="M3 125h5v5H3zM10 125h5v5h-5zM16 125h5v5h-5zM3 132h12v9H3z"/><path d="M7 134l4 2.500-4 2.500z" fill="#252525"/><circle cx="19" cy="152" r="2.500"/>
              </svg>
            </div>
          </div>
          <div class="flex w-[13px] flex-col items-center bg-[#f0f0f0] pt-1">
            <svg class="h-1.5 w-2" viewBox="0 0 8 6"><path d="M1 5l3-3 3 3" stroke="#444" stroke-width="1.500"/></svg>
            <div class="mt-[3px] h-3 w-[11px] bg-[#cdcdcd]"></div>
            <svg class="mt-auto mb-0.5 h-1.5 w-2" viewBox="0 0 8 6"><path d="M1 1l3 3 3-3" stroke="#444" stroke-width="1.500"/></svg>
          </div>
        </div>
        <div class="flex h-3 items-center bg-[#f0f0f0] text-[9px] leading-3">
          <svg class="h-3 w-[42px]" viewBox="0 0 42 12"><path d="M10.500 0v12M20.500 0v12M30.500 0v12" stroke="#bbb"/><path d="M2 3h1v6H2zM8 3v6L4 6zM18 3v6l-4-3zM24 3v6l4-3zM33 3v6l4-3zM38 3h1v6h-1z" fill="#777"/></svg>
          <button class="h-3 w-8 bg-black text-white [clip-path:polygon(0_0,100%_0,88%_100%,14%_100%)]">模型</button>
          <button class="w-[26px] text-right">布局1</button>
          <svg class="ml-0.5 h-3 w-1.5" viewBox="0 0 6 12"><path d="M6 0L1 12" stroke="#555"/></svg>
          <button class="w-[26px] text-right">布局2</button>
          <svg class="ml-1 h-3 w-1.5" viewBox="0 0 6 12"><path d="M6 0L1 12" stroke="#555"/></svg>
          <div class="ml-auto flex h-full w-[327px] items-center border-l border-[#888] pr-4 pl-1.5">
            <svg class="h-2 w-1.5" viewBox="0 0 6 8"><path d="M5 1L2 4l3 3" stroke="#444" stroke-width="1.500"/></svg>
            <div class="ml-auto h-2.5 w-3 bg-[#cdcdcd]"></div>
            <svg class="ml-1 h-2 w-1.5" viewBox="0 0 6 8"><path d="M1 1l3 3-3 3" stroke="#444" stroke-width="1.500"/></svg>
          </div>
        </div>
      </section>

      <aside class="mr-[3px] flex w-[17px] flex-col items-center overflow-hidden bg-[#ebebeb]">
        <div class="mb-px h-[6px] w-full shrink-0 border-y-2 border-[#555] bg-[#777]"></div>
        <div class="flex flex-col" data-icons="erase:删除 mcopy:复制 mirror:镜像 offset:偏移 array:阵列 move:移动 rotate:旋转 scale:缩放 stretch:拉伸 trim:修剪 extend:延伸 breakpt:打断于点 break:打断 join:合并 chamfer:倒角 fillet:圆角 blend:光顺曲线 explode:分解" data-size="md"></div>
        <div class="h-[8px] w-full shrink-0 border-y-2 border-[#555] bg-[#777]"></div>
        <div class="flex flex-col pt-px" data-icons="front:前置 back:后置 above:置于对象之上 under:置于对象之下" data-size="md"></div>
        <div class="my-px w-3.5 border-t border-[#aaa]"></div>
        <div class="flex flex-col" data-icons="abc:文字前置" data-size="md"></div>
      </aside>
    </main>

    <!-- Command line -->
    <div class="flex h-[42px] border-t border-[#888] bg-[#c8c8c8] font-['DejaVu_Sans_Mono','Noto_Sans_CJK_SC',monospace] text-[10px] leading-[11px] text-[#222]">
      <div class="w-3 shrink-0 bg-[#a0a0a0] pt-1"><div class="mx-px h-0.5 bg-[#666]"></div></div>
      <div class="flex min-w-0 flex-1 flex-col pt-px">
        <p>命令:</p>
        <p>命令: <span class="text-[9px]">_GcSmooth</span></p>
        <label class="mt-auto flex h-3 items-end bg-white leading-[10px]">选择第一条样条曲线:<input aria-label="命令输入" class="min-w-0 flex-1 outline-none"></label>
      </div>
    </div>
    <footer class="h-[17px] border-t border-[#333] bg-linear-to-b from-[#999] to-[#787878] pl-1 leading-4 text-[#111]">约束一条样条曲线，使其与其他样条曲线、直线、圆弧或多段线彼此相连并保持 G2 连续性。</footer>
  </div>

  <div class="flex h-2 shrink-0"><div class="w-1/5 bg-[#dcdcdc]"></div><div class="flex-1 bg-[#eeebdd]"></div></div>

  <!-- Page scrollbar behind the window -->
  <div class="absolute top-[23px] right-0 -z-10 flex h-[510px] w-[9px] flex-col items-center bg-[#e6e6e6]">
    <div class="h-8 w-full bg-[#f6f6f6]"></div>
    <svg class="mt-1 h-1.5 w-2" viewBox="0 0 8 6"><path d="M1 5l3-3 3 3" stroke="#777" stroke-width="1.500"/></svg>
    <div class="mt-[183px] h-[100px] w-full bg-[#b0b0b0]"></div>
  </div>

  <!-- Taskbar -->
  <div class="flex h-[29px] shrink-0 bg-[#04191e]">
    <button aria-label="开始" class="flex w-[35px] items-center justify-center"><svg class="size-3" viewBox="0 0 12 12"><path d="M0 2l5-1v4.500H0zM6 1l6-1v5.500H6zM0 6.500h5V11l-5-1zM6 6.500h6V12l-6-1z" fill="#fff"/></svg></button>
    <label class="flex w-[252px] items-center bg-[#f2f2f2] pr-2.5 pl-1.5">
      <svg class="size-4" viewBox="0 0 16 16"><circle cx="8" cy="8" r="6.800" stroke="#111" stroke-width="2"/></svg>
      <input aria-label="搜索" placeholder="在这里输入你要搜索的内容" class="min-w-0 flex-1 pl-1.5 text-[10px] placeholder:text-[#444]">
      <svg class="h-3.5 w-2.5" viewBox="0 0 10 14" stroke="#444"><rect x="3" y="1" width="4" height="7" rx="2"/><path d="M1 6v2c0 3 8 3 8 0V6M5 10v3M3 13h4"/></svg>
    </label>
    <button aria-label="画图" class="ml-[5px] flex w-[29px] flex-col items-center border-b-2 border-[#76cfe6] pt-1.5"><svg class="h-4 w-[18px]" viewBox="0 0 18 16"><path d="M1 9C1 2 12 0 15 6c1 3-3 3-3 5s-1 5-5 5-6-3-6-7z" fill="#cfe7f2"/><circle cx="5" cy="7" r="1.500" fill="#e33"/><circle cx="9" cy="5" r="1.500" fill="#fb3"/><circle cx="4" cy="11" r="1.500" fill="#3a4"/><circle cx="8" cy="13" r="1.500" fill="#36c"/><path d="M8 10l7-10 2 1-6 10z" fill="#d68a3a"/></svg></button>
    <button aria-label="Edge" class="ml-[7px] flex w-[29px] flex-col items-center border-b-2 border-[#76cfe6] pt-1.5"><svg class="size-4" viewBox="0 0 16 16"><path d="M1 7C2 2 5 0 8 0c5 0 7 4 7 7v2H5c0 3 5 5 9 2v4C8 18 2 15 2 10c0-2 1-4 3-5-2 0-3 1-4 2zm4-1h6c0-4-6-4-6 0z" fill="#0a7ad8"/></svg></button>
    <button aria-label="电影和电视" class="ml-[7px] flex w-[29px] flex-col items-center border-b-2 border-[#76cfe6] pt-1.5"><svg class="size-[18px]" viewBox="0 0 18 18"><path d="M1 7h16v10H1z" fill="#fff"/><path d="M0 3l16-3 1 3.500L1 6z" fill="#fff"/><path d="M3 2l2 4M7 1l2 4M11 0l2 4" stroke="#04191e" stroke-width="1.500"/></svg></button>
    <button aria-label="AutoCAD" class="ml-1 flex w-[34px] flex-col items-center border-b-2 border-[#76cfe6] bg-[#3c4a4e] pt-1"><svg class="h-[18px] w-4" viewBox="0 0 16 18"><path d="M1 10h14v6H1z" fill="#ccc"/><path d="M1 14L6 1h4l5 12-4 1-1-3-4 1-1 3z" fill="#d6201f"/><path d="M6 1h4l5 12-4 1z" fill="#a30f14"/></svg></button>
  </div>

  <!-- Watermarks -->
  <div class="absolute bottom-0.5 left-[768px] z-30 h-[88px] font-['Liberation_Sans',sans-serif] text-white/80">
    <p class="text-[42px] leading-[50px] font-bold">Bai</p>
    <p class="text-[23px] leading-6">jing</p>
  </div>
  <svg class="absolute right-[128px] bottom-[90px] z-30 h-5 w-[34px]" viewBox="0 0 34 20"><ellipse cx="10" cy="14" rx="7" ry="11" fill="#fff" fill-opacity=".85" stroke="#ddd"/><ellipse cx="26" cy="14" rx="7" ry="11" fill="#fff" fill-opacity=".85" stroke="#ddd"/></svg>
  <div class="absolute right-0 bottom-0 z-40 flex h-[95px] w-[200px] items-center bg-[#223056] pt-0.5 pl-2.5 text-[#cdcdcd]">
    <svg class="h-[62px] w-[48px] shrink-0" viewBox="212 132 144 186"><path d="M224 157l14 6c8-3 20-1 27 5l6 14c-5 4-13 4-20 3-1 9 0 18 3 26 18 7 42 9 62 18 12 6 14 20 12 32l6 20-2 27h-12l4-24c-9-11-17-22-19-33-13 6-31 7-45 3-3 14-10 26-11 37l-1 18h-13l4-45c-12-13-22-34-21-53 2-20 19-28 20-41-7-3-9-8-10-13z" fill="#cdcdcd"/><path d="M253 166c3-5 7-8 14-9 28-1 53 7 78-12M254 161c-5-6-3-12 1-19M262 158c-3-6 0-11 4-17M278 156c-6-5-2-12 7-17M296 156c5 9 15 11 23 8M290 156c1-5 3-9 8-11" stroke="#cdcdcd" stroke-width="4"/></svg>
    <div class="ml-1.5 flex flex-col">
      <p class="flex items-center leading-[32px] font-medium"><span class="font-['Roboto',sans-serif] text-[38px]">3D</span><span class="text-[27px]">溜溜网</span></p>
      <p class="mt-0.5 font-['Inter',sans-serif] text-[24px] leading-6">3D66.COM</p>
    </div>
  </div>

  <!-- Annotation arrow -->
  <svg class="pointer-events-none absolute top-0 left-0 z-50 h-[330px] w-[610px]" viewBox="0 0 610 330" stroke="#86061a" stroke-linecap="round"><path d="M237 319L592 179M542 174l53 8M566 208l24-30" stroke-width="4"/></svg>

  <script>
    // Build toolbar buttons from "icon:label" lists, "|" is a separator
    document.querySelectorAll('[data-icons]').forEach(bar => {
      const size = bar.dataset.size;
      bar.innerHTML = bar.dataset.icons.split(' ').map(item => {
        if (item === '|') return '<span class="mx-0.5 h-3 w-px bg-[#999]"></span>';
        const [id, label] = item.split(':');
        const cls = id === 'down' ? 'flex w-[9px] justify-center'
          : size === 'md' ? 'flex size-4 items-center justify-center'
          : size === 'sm' ? 'flex w-4 justify-center'
          : 'flex w-[17px] justify-center';
        const svg = id === 'down' ? 'size-1.5' : 'size-3.5';
        return `<button class="${cls}" aria-label="${label}"><svg class="${svg}"><use href="#${id}"/></svg></button>`;
      }).join('');
    });

    const constraints = [
      ['coincident', '重合(C)'], ['perp', '垂直(P)'], ['parallel', '平行(A)'], ['tangent', '相切(T)'],
      ['horizontal', '水平(H)'], ['vertical', '竖直(V)'], ['collinear', '共线(L)'], ['concentric', '同心(N)'],
      ['smooth', '平滑(M)'], ['symmetric', '对称(S)'], ['equal', '相等(E)'], ['fix', '固定(F)']
    ];
    document.getElementById('geo').innerHTML = constraints.map(([id, label]) => `
      <li class="px-px"><button class="flex h-4 w-full items-center ${id === 'smooth' ? 'bg-[#91c9f7]' : ''}">
        <span class="flex w-[23px] pl-[3px]"><svg class="size-3"><use href="#g-${id}"/></svg></span>${label}
      </button></li>`).join('');
  </script>
</body>
</html>
